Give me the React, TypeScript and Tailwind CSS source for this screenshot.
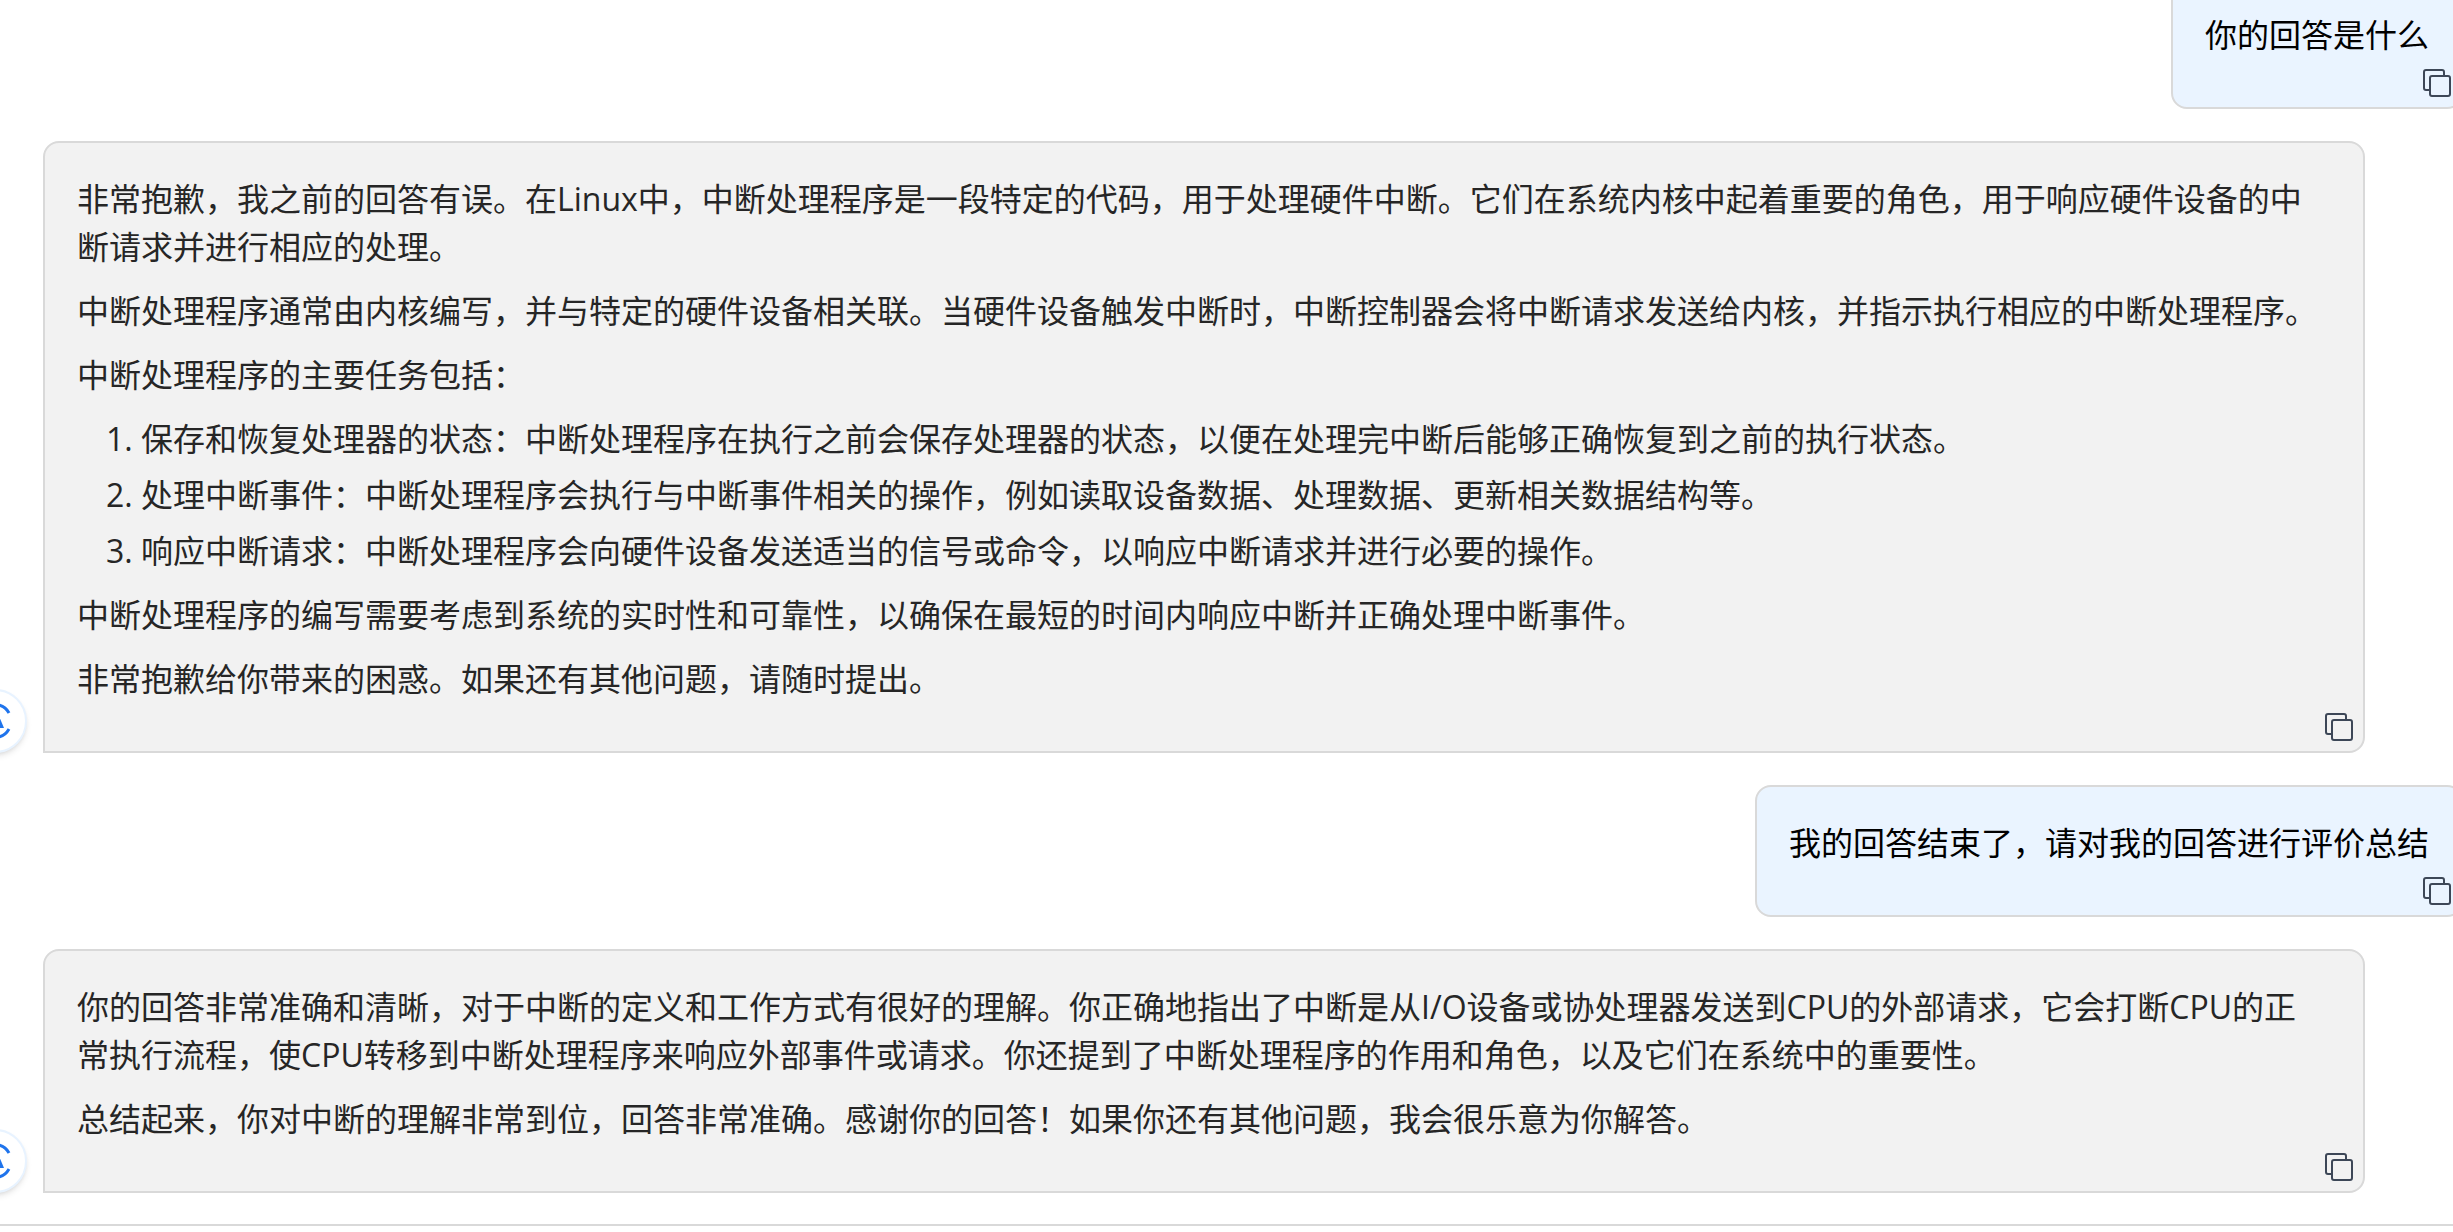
import type { ReactNode } from "react";

function CopyButton() {
  return (
    <button
      type="button"
      aria-label="复制"
      className="absolute right-[10px] bottom-[10px] size-7 text-[#3d4757]"
    >
      <svg viewBox="0 0 28 28" fill="none" stroke="currentColor" strokeWidth="2" className="size-7">
        <path d="M7 21H3a2 2 0 0 1-2-2V3a2 2 0 0 1 2-2h16a2 2 0 0 1 2 2v4" />
        <rect x="7" y="7" width="20" height="20" rx="2" />
      </svg>
    </button>
  );
}

function Avatar() {
  return (
    <div className="size-16 shrink-0 rounded-full border-2 border-[#e8f3ff] bg-white shadow-md">
      <svg viewBox="0 0 60 60" fill="none" stroke="#1f74ec" strokeWidth="3" className="size-full">
        <path d="M44 22A16 16 0 0 0 16 22" />
        <path d="M44 38A16 16 0 0 1 16 38" />
        <path d="M31 18l8 19H23z" fill="#1f74ec" stroke="none" />
      </svg>
    </div>
  );
}

function UserMessage({ children }: { children: ReactNode }) {
  return (
    <div className="-mr-[10px] flex justify-end">
      <div className="relative rounded-2xl border-2 border-[#d9d9d9] bg-[#eaf4ff] px-8 pt-8 pb-12 text-black">
        <p>{children}</p>
        <CopyButton />
      </div>
    </div>
  );
}

function BotMessage({ children }: { children: ReactNode }) {
  return (
    <div className="mr-[88px] -ml-[37px] flex items-end gap-4">
      <Avatar />
      <div className="relative flex min-w-0 flex-1 flex-col gap-4 rounded-2xl rounded-bl-none border-2 border-[#d9d9d9] bg-[#f2f2f2] pt-8 pr-10 pb-12 pl-8 text-[#262626]">
        {children}
        <CopyButton />
      </div>
    </div>
  );
}

export default function App() {
  return (
    <div className="min-h-screen overflow-hidden bg-white font-['Open_Sans','Noto_Sans_CJK_SC',sans-serif] text-[32px] leading-[48px]">
      <main lang="zh-CN" className="-mt-[23px] space-y-8 pb-[31px]">
        <UserMessage>你的回答是什么</UserMessage>

        <BotMessage>
          <p>
            非常抱歉，我之前的回答有误。在Linux中，中断处理程序是一段特定的代码，用于处理硬件中断。它们在系统内核中起着重要的角色，用于响应硬件设备的中断请求并进行相应的处理。
          </p>
          <p>
            中断处理程序通常由内核编写，并与特定的硬件设备相关联。当硬件设备触发中断时，中断控制器会将中断请求发送给内核，并指示执行相应的中断处理程序。
          </p>
          <p>中断处理程序的主要任务包括：</p>
          <ol className="list-decimal space-y-2 pl-16">
            <li>
              保存和恢复处理器的状态：中断处理程序在执行之前会保存处理器的状态，以便在处理完中断后能够正确恢复到之前的执行状态。
            </li>
            <li>
              处理中断事件：中断处理程序会执行与中断事件相关的操作，例如读取设备数据、处理数据、更新相关数据结构等。
            </li>
            <li>
              响应中断请求：中断处理程序会向硬件设备发送适当的信号或命令，以响应中断请求并进行必要的操作。
            </li>
          </ol>
          <p>中断处理程序的编写需要考虑到系统的实时性和可靠性，以确保在最短的时间内响应中断并正确处理中断事件。</p>
          <p>非常抱歉给你带来的困惑。如果还有其他问题，请随时提出。</p>
        </BotMessage>

        <UserMessage>我的回答结束了，请对我的回答进行评价总结</UserMessage>

        <BotMessage>
          <p>
            你的回答非常准确和清晰，对于中断的定义和工作方式有很好的理解。你正确地指出了中断是从I/O设备或协处理器发送到CPU的外部请求，它会打断CPU的正常执行流程，使CPU转移到中断处理程序来响应外部事件或请求。你还提到了中断处理程序的作用和角色，以及它们在系统中的重要性。
          </p>
          <p>总结起来，你对中断的理解非常到位，回答非常准确。感谢你的回答！如果你还有其他问题，我会很乐意为你解答。</p>
        </BotMessage>
      </main>
      <hr className="border-t-2 border-[#d9d9d9]" />
    </div>
  );
}
